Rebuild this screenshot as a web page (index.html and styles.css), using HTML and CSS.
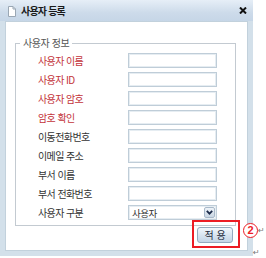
FILE: index.html
```html
<!DOCTYPE html>
<html lang="ko">
<head>
<meta charset="utf-8">
<title>사용자 등록</title>
<link rel="stylesheet" href="styles.css">
</head>
<body>
<div class="page">
  <div class="dialog">
    <div class="titlebar">
      <svg class="doc-icon" width="8" height="11" viewBox="0 0 8 11">
        <path d="M0.5 0.5 H5 L7.5 3 V10.5 H0.5 Z" fill="#fff" stroke="#9aa7b4" stroke-width="1"/>
        <path d="M5 0.5 V3 H7.5" fill="none" stroke="#9aa7b4" stroke-width="1"/>
      </svg>
      <span class="title">사용자 등록</span>
      <svg class="close" width="8" height="7" viewBox="0 0 8 7">
        <path d="M1 0.5 L7 6.5 M7 0.5 L1 6.5" stroke="#111" stroke-width="2"/>
      </svg>
    </div>
    <div class="dialog-body">
      <fieldset class="group">
        <legend class="legend">사용자 정보</legend>
        <div class="form">
          <span class="lbl req">사용자 이름</span><span class="field"></span>
          <span class="lbl req">사용자 ID</span><span class="field"></span>
          <span class="lbl req">사용자 암호</span><span class="field"></span>
          <span class="lbl req">암호 확인</span><span class="field"></span>
          <span class="lbl">이동전화번호</span><span class="field"></span>
          <span class="lbl">이메일 주소</span><span class="field"></span>
          <span class="lbl">부서 이름</span><span class="field"></span>
          <span class="lbl">부서 전화번호</span><span class="field"></span>
          <span class="lbl">사용자 구분</span>
          <span class="field select"><span class="sel-text">사용자</span>
            <span class="sel-btn"><svg width="7" height="5" viewBox="0 0 7 5"><path d="M0.8 0.8 L3.5 3.6 L6.2 0.8" fill="none" stroke="#1c2b4a" stroke-width="1.8"/></svg></span>
          </span>
        </div>
      </fieldset>
      <div class="actions">
        <button class="btn" type="button">적 용</button>
      </div>
    </div>
  </div>
  <span class="highlight"></span>
  <span class="badge">2</span>
  <span class="mark mark-a">↵</span>
  <span class="mark mark-b">↵</span>
</div>
</body>
</html>
```

FILE: styles.css
```css
html, body {
  margin: 0;
  padding: 0;
  background: #fff;
}

body {
  font-family: "Noto Sans CJK KR", "Noto Sans", sans-serif;
}

.page {
  position: relative;
  width: 266px;
  height: 258px;
}

.dialog {
  width: 253px;
  height: 256px;
  box-sizing: border-box;
  background: #d3e0ea;
  padding: 0 5px 5px 5px;
  display: flex;
  flex-direction: column;
}

.titlebar {
  height: 21px;
  margin: 0 -5px;
  padding: 0 6px 0 8px;
  display: flex;
  align-items: center;
  background: linear-gradient(#e6eef7, #cddbea 60%, #c6d6e7);
}

.doc-icon {
  margin-top: 1px;
}

.title {
  margin-left: 5px;
  font-size: 10px;
  font-weight: bold;
  letter-spacing: -0.8px;
  color: #1a1a1a;
  line-height: 12px;
}

.close {
  margin-left: auto;
  margin-right: 0;
}

.dialog-body {
  flex: 1;
  background: #fff;
  box-shadow: inset 0 0 0 1px #c2d1dc;
  display: flex;
  flex-direction: column;
}

.group {
  margin: 16px 12px 0 10px;
  padding: 4px 0 5px 4px;
  border: 1px solid #c3cad1;
  min-width: 0;
}

.legend {
  padding: 0 3px;
  font-size: 10px;
  line-height: 12px;
  letter-spacing: -0.4px;
  color: #555;
}

.form {
  margin-left: 18px;
  display: grid;
  grid-template-columns: 90px 89px;
  grid-auto-rows: 15px;
  row-gap: 4px;
  align-items: center;
}

.lbl {
  font-size: 10px;
  line-height: 12px;
  letter-spacing: -0.6px;
  color: #333;
  white-space: nowrap;
}

.lbl.req {
  color: #c3333a;
}

.field {
  height: 15px;
  box-sizing: border-box;
  border: 1px solid #bfcdd8;
  box-shadow: inset 0 0 0 1px #e6edf2;
  background: #fff;
}

.select {
  display: flex;
  align-items: center;
  padding: 0 1px 0 3px;
}

.sel-text {
  font-size: 9.5px;
  line-height: 12px;
  letter-spacing: -0.5px;
  color: #333;
}

.sel-btn {
  margin-left: auto;
  width: 11px;
  height: 11px;
  border-radius: 2px;
  background: linear-gradient(#eef3f8, #c9d6e3);
  border: 1px solid #a9b9c9;
  box-sizing: border-box;
  display: flex;
  align-items: center;
  justify-content: center;
}

.actions {
  display: flex;
  justify-content: flex-end;
  padding-right: 15px;
  margin-top: 1px;
}

.btn {
  width: 36px;
  height: 16px;
  padding: 0;
  margin: 0;
  border: 1px solid #93a9be;
  border-radius: 3px;
  background: linear-gradient(#f2f7fc, #d6e3f0 55%, #c4d5e6);
  font-family: "Noto Sans CJK KR", sans-serif;
  font-size: 10px;
  line-height: 12px;
  color: #1d2a3a;
  letter-spacing: 0;
}

.highlight {
  position: absolute;
  left: 192px;
  top: 220px;
  width: 48px;
  height: 28px;
  box-sizing: border-box;
  border: 2px solid #ec1c24;
}

.badge {
  position: absolute;
  left: 243px;
  top: 223px;
  width: 15px;
  height: 15px;
  box-sizing: border-box;
  border: 1.5px solid #ec1c24;
  border-radius: 50%;
  background: #fff;
  color: #ec1c24;
  font-family: "Liberation Sans", sans-serif;
  font-weight: bold;
  font-size: 11px;
  line-height: 12px;
  text-align: center;
}

.mark {
  position: absolute;
  font-family: "DejaVu Sans", sans-serif;
  font-size: 8px;
  line-height: 8px;
  color: #777;
}

.mark-a {
  left: 258px;
  top: 227px;
}

.mark-b {
  left: 253px;
  top: 249px;
}
```
